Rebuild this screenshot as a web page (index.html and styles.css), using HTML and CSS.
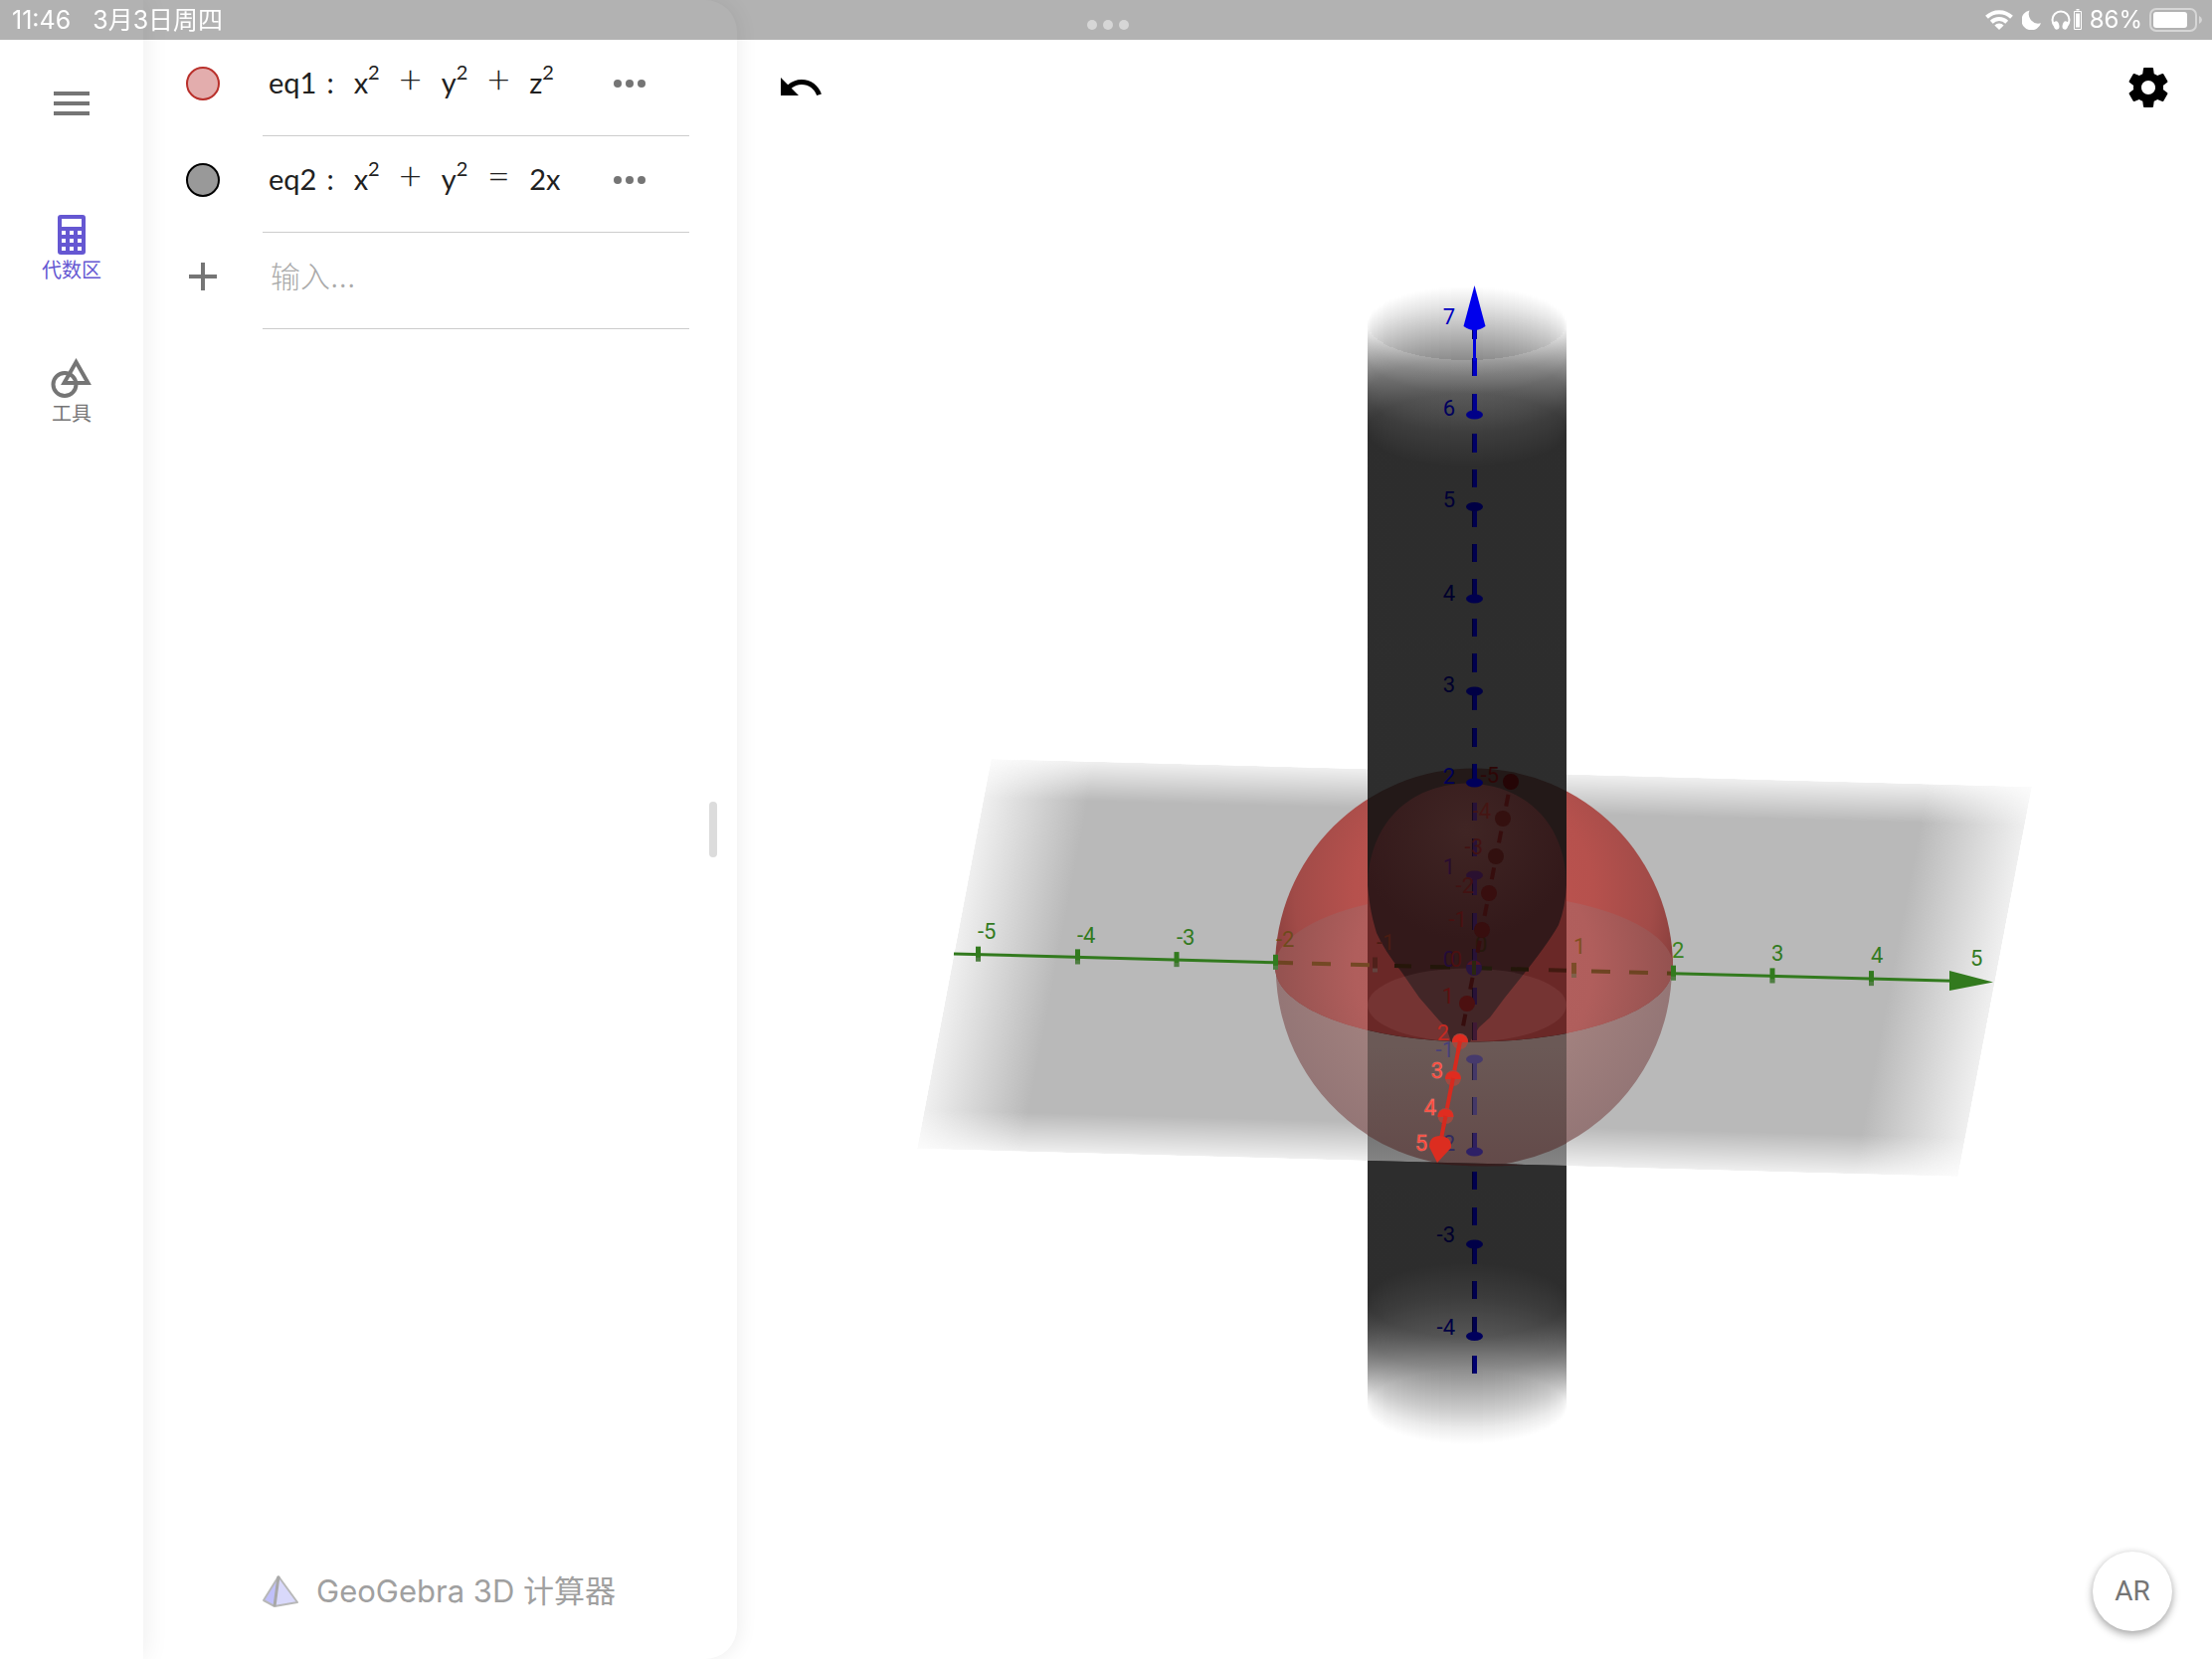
FILE: index.html
```html
<!DOCTYPE html>
<html lang="zh-CN">
<head>
<meta charset="utf-8">
<meta name="viewport" content="width=device-width, initial-scale=1">
<title>GeoGebra 3D 计算器</title>
<link rel="stylesheet" href="styles.css">
</head>
<body>
<header class="status">
  <div class="status-left"><span>11:46</span><span>3月3日周四</span></div>
  <div class="status-dots"><i></i><i></i><i></i></div>
  <div class="status-right">
    <svg class="ico-wifi" viewBox="0 0 28 20" aria-hidden="true"><g fill="none" stroke="#fff" stroke-width="4"><path d="M1.500 7.200A18 18 0 0 1 26.500 7.200"/><path d="M6.300 12.200A11 11 0 0 1 21.700 12.200"/></g><path d="M14 20l-4.600-4.600a6.500 6.500 0 0 1 9.200 0z" fill="#fff"/></svg>
    <svg class="ico-moon" viewBox="0 0 20 20" aria-hidden="true"><path d="M7.500 0.500A10 10 0 1 0 19 13.200 9.500 9.500 0 0 1 7.500 0.500z" fill="#fff"/></svg>
    <svg class="ico-phones" viewBox="0 0 32 22" aria-hidden="true"><path d="M4 17A8.500 8.500 0 1 1 16 17" fill="none" stroke="#fff" stroke-width="2"/><ellipse cx="5.500" cy="16.500" rx="2.800" ry="4.200" transform="rotate(-15 5.500 16.500)" fill="#fff"/><ellipse cx="14.500" cy="16.500" rx="2.800" ry="4.200" transform="rotate(15 14.500 16.500)" fill="#fff"/><path d="M23.500 2.500h7v18h-7z" fill="none" stroke="#fff"/><path d="M25 4.500h4v14h-4zM25.500 0h3v1.500h-3z" fill="#fff"/></svg>
    <span>86%</span>
    <svg class="ico-battery" viewBox="0 0 54 24" aria-hidden="true"><rect x="1" y="1" width="46" height="22" rx="6" fill="none" stroke="#d6d6d6" stroke-width="2"/><rect x="4" y="4" width="34" height="16" rx="3" fill="#fff"/><path d="M50 8q3 1.500 3 4t-3 4z" fill="#d6d6d6"/></svg>
  </div>
</header>

<div class="app">
  <nav class="rail">
    <button class="menu" aria-label="菜单"><svg viewBox="0 0 48 48"><path d="M6 12h36v4H6zM6 22h36v4H6zM6 32h36v4H6z"/></svg></button>
    <button class="tab active"><svg viewBox="0 0 48 48"><path fill-rule="evenodd" d="M13 4h22a3 3 0 0 1 3 3v34a3 3 0 0 1-3 3H13a3 3 0 0 1-3-3V7a3 3 0 0 1 3-3zM14 8v8h20V8zM14 20v4h4v-4zM22 20v4h4v-4zM30 20v4h4v-4zM14 28v4h4v-4zM22 28v4h4v-4zM30 28v4h4v-4zM14 36v4h4v-4zM22 36v4h4v-4zM30 36v4h4v-4z"/></svg><span>代数区</span></button>
    <button class="tab"><svg viewBox="0 0 48 48"><g fill="none" stroke="currentColor" stroke-width="4"><circle cx="17" cy="30.500" r="11.500"/><path d="M28.500 8L40.500 29H16.500z"/></g></svg><span>工具</span></button>
  </nav>

  <main class="panel">
    <ul class="rows">
      <li class="row">
        <button class="marble red" aria-label="eq1"></button>
        <div class="cell">
          <div class="formula"><span class="name">eq1</span><span class="colon">:</span><span>x<sup>2</sup></span><span class="op">+</span><span>y<sup>2</sup></span><span class="op">+</span><span>z<sup>2</sup></span></div>
          <button class="more" aria-label="更多"><svg viewBox="0 0 48 48"><circle cx="12" cy="24" r="4"/><circle cx="24" cy="24" r="4"/><circle cx="36" cy="24" r="4"/></svg></button>
        </div>
      </li>
      <li class="row">
        <button class="marble black" aria-label="eq2"></button>
        <div class="cell">
          <div class="formula"><span class="name">eq2</span><span class="colon">:</span><span>x<sup>2</sup></span><span class="op">+</span><span>y<sup>2</sup></span><span class="op">=</span><span>2x</span></div>
          <button class="more" aria-label="更多"><svg viewBox="0 0 48 48"><circle cx="12" cy="24" r="4"/><circle cx="24" cy="24" r="4"/><circle cx="36" cy="24" r="4"/></svg></button>
        </div>
      </li>
      <li class="row">
        <button class="plus" aria-label="添加"><svg viewBox="0 0 48 48"><path d="M22 10h4v12h12v4H26v12h-4V26H10v-4h12z"/></svg></button>
        <div class="cell"><input class="entry" type="text" placeholder="输入..." aria-label="输入"></div>
      </li>
    </ul>
    <footer class="brand">
      <svg viewBox="0 0 36 32" aria-hidden="true"><path d="M16 1L1 25l11 6z" fill="#c0c0fa"/><path d="M16 1l19 26-23 4z" fill="#d9d9fb"/><path d="M16 1L1 25l11 6 23-4z" fill="none" stroke="#b8b8b8" stroke-width="2" stroke-linejoin="round"/><path d="M16 1l-4 30" stroke="#a8a8a8" stroke-width="3"/></svg>
      <span>GeoGebra 3D 计算器</span>
    </footer>
    <div class="handle"></div>
  </main>

  <section class="view">
    <svg class="scene" viewBox="741 0 1483 1668" role="img" aria-label="3D">
      <defs>
        <linearGradient id="planeH"><stop offset="0" stop-color="#b9b9b9" stop-opacity=".22"/><stop offset=".1" stop-color="#b9b9b9"/><stop offset=".9" stop-color="#b9b9b9"/><stop offset="1" stop-color="#b9b9b9" stop-opacity=".22"/></linearGradient>
        <linearGradient id="planeV" x2="0" y2="1"><stop offset="0" stop-color="#fff" stop-opacity=".22"/><stop offset=".1" stop-color="#fff"/><stop offset=".9" stop-color="#fff"/><stop offset="1" stop-color="#fff" stop-opacity=".22"/></linearGradient>
        <mask id="planeMask" maskUnits="userSpaceOnUse" x="0" y="0" width="1000" height="1000"><rect width="1000" height="1000" fill="url(#planeV)"/></mask>
        <linearGradient id="wallBack" x2="0" y2="1">
          <stop offset="0" stop-opacity="0"/><stop offset=".015" stop-opacity=".09"/><stop offset=".031" stop-opacity=".2"/><stop offset=".067" stop-opacity=".45"/><stop offset=".099" stop-opacity=".58"/>
          <stop offset=".901" stop-opacity=".58"/><stop offset=".932" stop-opacity=".44"/><stop offset=".969" stop-opacity=".2"/><stop offset=".985" stop-opacity=".08"/><stop offset="1" stop-opacity="0"/>
        </linearGradient>
        <linearGradient id="wallFront" x2="0" y2="1">
          <stop offset="0" stop-color="#fff" stop-opacity=".16"/><stop offset=".015" stop-color="#707070" stop-opacity=".16"/><stop offset=".031" stop-color="#181818" stop-opacity=".22"/><stop offset=".067" stop-opacity=".43"/><stop offset=".099" stop-opacity=".58"/>
          <stop offset=".901" stop-opacity=".58"/><stop offset=".932" stop-opacity=".44"/><stop offset=".969" stop-opacity=".2"/><stop offset=".985" stop-opacity=".08"/><stop offset="1" stop-opacity="0"/>
        </linearGradient>
        <radialGradient id="red" gradientUnits="userSpaceOnUse" cx="1482" cy="900" r="240"><stop offset="0" stop-color="#c25651"/><stop offset=".5" stop-color="#b6514d"/><stop offset=".75" stop-color="#a14b48"/><stop offset=".9" stop-color="#843d3b"/></radialGradient>
        <radialGradient id="disc" gradientUnits="userSpaceOnUse" cx="1482" cy="972" r="200"><stop offset="0" stop-color="#b56260"/><stop offset=".6" stop-color="#b05e5c"/><stop offset="1" stop-color="#945250"/></radialGradient>
        <radialGradient id="low" gradientUnits="userSpaceOnUse" cx="1482" cy="972" r="200"><stop offset=".5" stop-color="#a48380"/><stop offset="1" stop-color="#947676"/></radialGradient>
        <radialGradient id="lens" gradientUnits="userSpaceOnUse" cx="1474" cy="835" r="110"><stop offset="0" stop-color="#402524"/><stop offset="1" stop-color="#33191a"/></radialGradient>
        <linearGradient id="skirt" x2="0" y2="1"><stop offset="0" stop-color="#6b6b6b"/><stop offset=".7" stop-color="#6d6d6d"/><stop offset="1" stop-color="#858585"/></linearGradient>
        <linearGradient id="lowCol" x2="0" y2="1"><stop offset=".4" stop-color="#6b5956"/><stop offset="1" stop-color="#634a49"/></linearGradient>
        <clipPath id="column"><rect x="1375" y="200" width="200" height="1300"/></clipPath>
        <clipPath id="belowCut"><rect x="1375" y="890" width="200" height="300"/></clipPath>
        <clipPath id="abovePlane"><path d="M1282 972.500A200 200 0 0 1 1682 972.500A200 75 0 0 1 1282 972.500z"/></clipPath>
      </defs>

      <g transform="matrix(1.0465 .028 -.0745 .392 996.500 763)"><rect width="1000" height="1000" fill="url(#planeH)" mask="url(#planeMask)"/></g>

      <rect x="1375" y="760" width="200" height="220" fill="#fff"/>
      <g id="walls" shape-rendering="crispEdges"></g>
      <path d="M1375 1011V1167L1575 1172V1011z" fill="url(#skirt)"/>

      <path d="M1375 804A200 200 0 0 0 1375 1141zM1575 796A200 200 0 0 1 1575 1149z" fill="url(#low)"/>
      <g clip-path="url(#abovePlane)">
        <path d="M1280 770h95v300h-95zM1575 770h110v300h-110z" fill="url(#red)"/>
        <path d="M1375 909A200 75 0 0 0 1375 1036zM1575 906A200 75 0 0 1 1575 1039z" fill="url(#disc)"/>
      </g>
      <g clip-path="url(#column)">
        <path d="M1282 972.500A200 200 0 0 0 1682 972.500z" fill="url(#lowCol)"/>
        <path d="M1375 1167L1575 1172V1190H1375z" fill="#2d2d2d"/>
        <path d="M1432 1168.500L1532 1171Q1482 1175 1432 1168.500z" fill="#371d1d"/>
        <path d="M1282 972.500A200 200 0 0 1 1682 972.500A200 75 0 0 1 1282 972.500z" fill="#231918"/>
        <g clip-path="url(#belowCut)"><path d="M1282 972.500A200 200 0 0 1 1682 972.500A200 75 0 0 1 1282 972.500z" fill="#6a2827"/></g>
        <path d="M1475 787.500C1416 789 1377 828 1375 890C1377 912 1380 925 1384 938Q1392 956 1409 977L1427 1003 1447 1026 1454 1033 1459 1047.500H1478L1487 1033 1498 1023 1513 1003 1537 973Q1558 946 1567 930Q1574 912 1575 890C1574 828 1535 789 1475 787.500z" fill="url(#lens)"/>
        <ellipse cx="1475" cy="1010.500" rx="100" ry="37" fill="#ffc8c8" fill-opacity=".075"/>
      </g>

      <g id="axis-z"></g>
      <g id="axis-y"></g>
      <g id="labels" class="labels"></g>
      <g id="axis-x"></g>
    </svg>
    <button class="tool undo" aria-label="撤销"><svg viewBox="0 0 24 24"><path d="M12.500 8c-2.650 0-5.050.990-6.900 2.600L2 7v9h9l-3.620-3.620c1.390-1.160 3.160-1.880 5.120-1.880 3.540 0 6.550 2.310 7.600 5.500l2.370-.780C21.080 11.030 17.150 8 12.500 8z"/></svg></button>
    <button class="tool settings" aria-label="设置"><svg viewBox="0 0 24 24"><path d="M19.430 12.980c.04-.32.07-.64.07-.98s-.03-.66-.07-.98l2.110-1.650c.19-.15.24-.42.12-.64l-2-3.460c-.12-.22-.39-.3-.61-.22l-2.490 1c-.52-.4-1.080-.73-1.690-.98l-.38-2.650C14.460 2.180 14.250 2 14 2h-4c-.25 0-.46.18-.49.42l-.38 2.650c-.61.25-1.170.59-1.690.98l-2.490-1c-.23-.09-.49 0-.61.22l-2 3.460c-.13.22-.07.49.12.64l2.110 1.650c-.04.32-.07.65-.07.98s.03.66.07.98l-2.110 1.650c-.19.15-.24.42-.12.64l2 3.460c.12.22.39.3.61.22l2.490-1c.52.4 1.080.73 1.690.98l.38 2.650c.03.24.24.42.49.42h4c.25 0 .46-.18.49-.42l.38-2.650c.61-.25 1.170-.59 1.690-.98l2.490 1c.23.09.49 0 .61-.22l2-3.460c.12-.22.07-.49-.12-.64l-2.110-1.650zM12 15.500c-1.930 0-3.500-1.570-3.500-3.500s1.570-3.500 3.500-3.500 3.500 1.570 3.500 3.500-1.570 3.500-3.500 3.500z"/></svg></button>
    <button class="ar">AR</button>
  </section>
</div>
<script src="scene.js"></script>
</body>
</html>
```

FILE: styles.css
```css
* { box-sizing: border-box; }
body { margin: 0; background: #fff; font-family: Inter, "Noto Sans CJK SC", sans-serif; color: #757575; }
button { border: 0; padding: 0; margin: 0; background: none; font: inherit; color: inherit; cursor: pointer; }
svg { display: block; fill: currentColor; }

.status { position: fixed; top: 0; left: 0; right: 0; z-index: 10; height: 40px; padding: 0 9px 0 12px; display: grid; grid-template-columns: 1fr auto 1fr; align-items: center; background: rgba(0, 0, 0, .3); color: #fff; font-size: 24px; line-height: 40px; }
.status-left { display: flex; gap: 22px; font-size: 25px; }
.status-dots { display: flex; gap: 6px; padding-top: 10px; }
.status-dots i { width: 10px; height: 10px; border-radius: 50%; background: #d6d6d6; }
.status-right { display: flex; justify-content: flex-end; align-items: center; gap: 7px; }
.ico-wifi { width: 28px; height: 20px; }
.ico-moon { width: 20px; height: 20px; margin-left: 2px; }
.ico-phones { width: 32px; height: 22px; margin-left: 2px; }
.ico-battery { width: 54px; height: 24px; }

.app { display: grid; grid-template-columns: 144px 597px 1fr; height: 100vh; }

.rail { position: relative; z-index: 3; display: flex; flex-direction: column; align-items: center; gap: 72px; padding-top: 40px; background: #fff; box-shadow: 2px 0 24px rgba(0, 0, 0, .07); }
.rail svg { width: 48px; height: 48px; }
.menu { height: 128px; width: 144px; display: flex; align-items: center; justify-content: center; margin-bottom: -28px; }
.tab { width: 144px; display: flex; flex-direction: column; align-items: center; font-size: 20px; line-height: 24px; }
.tab.active { color: #6557d2; }

.panel { position: relative; z-index: 2; display: flex; flex-direction: column; padding-top: 40px; background: #fff; border-radius: 0 32px 32px 0; box-shadow: 2px 0 20px rgba(0, 0, 0, .07); }
.rows { list-style: none; margin: 0; padding: 0 48px 0 0; }
.row { display: grid; grid-template-columns: 120px 1fr; height: 97px; }
.row > button { justify-self: center; align-self: center; margin-bottom: 9px; }
.cell { display: flex; align-items: center; padding: 0 36px 8px 6px; border-bottom: 1px solid #ccc; }
.marble { width: 34px; height: 34px; border-radius: 50%; border: 2px solid; }
.marble.red { background: #e3adad; border-color: #b9302b; }
.marble.black { background: #999; border-color: #000; }
.plus svg, .more svg { width: 48px; height: 48px; }
.formula { flex: 1; display: flex; align-items: baseline; gap: 20px; padding-bottom: 6px; color: #212121; font: 29px/40px Lato, "Liberation Sans", sans-serif; white-space: nowrap; }
.formula .colon { margin-left: -10px; }
.formula .op { width: 22px; display: flex; justify-content: center; font-size: 40px; font-weight: 300; line-height: 40px; }
.formula sup { font-size: 20px; line-height: 0; vertical-align: 14px; }
.entry { width: 100%; height: 48px; border: 0; outline: 0; padding: 0 2px; background: none; font: 300 30px/48px Inter, "Noto Sans CJK SC", sans-serif; color: #212121; }
.entry::placeholder { color: #aaa; opacity: 1; }
.brand { margin-top: auto; padding: 0 0 48px 120px; display: flex; align-items: center; gap: 18px; font-size: 31px; line-height: 40px; color: #a0a0a0; white-space: nowrap; }
.brand svg { width: 36px; height: 32px; }
.handle { position: absolute; right: 20px; top: 50%; width: 8px; height: 56px; margin-top: -28px; border-radius: 4px; background: #dcdcdc; }

.view { position: relative; min-width: 0; height: 100vh; background: #fff; }
.scene { width: 100%; height: 100%; }
.labels { font: 22px Roboto, sans-serif; }
.tool { position: absolute; top: 64px; color: #000; }
.tool svg { width: 48px; height: 48px; }
.undo { left: 40px; }
.settings { right: 40px; }
.ar { position: absolute; right: 40px; bottom: 28px; width: 80px; height: 80px; border-radius: 50%; background: #fff; color: #757575; font: 28px/80px Roboto, sans-serif; box-shadow: 0 4px 8px rgba(0, 0, 0, .3), 0 0 6px rgba(0, 0, 0, .1); }
```

FILE: scene.js
```js
const NS = 'http://www.w3.org/2000/svg';
function add(parent, tag, attrs, text) {
  const el = document.createElementNS(NS, tag);
  for (const key in attrs) el.setAttribute(key, attrs[key]);
  if (text !== undefined) el.textContent = text;
  document.getElementById(parent).appendChild(el);
}

// Cylinder walls: vertical strips that share one gradient, shifted along the rim ellipse.
for (const side of [-1, 1]) {
  const fill = side < 0 ? 'url(#wallBack)' : 'url(#wallFront)';
  for (let x = 1375; x < 1575; x += 2) {
    const t = (x + 1 - 1475) / 100;
    const dy = side * 37 * Math.sqrt(1 - t * t);
    add('walls', 'rect', { x, y: Math.round(325 + dy), width: 2, height: 1090, fill });
  }
}

// z axis: dashes [from, to, colour], then tick discs
const navy = '#00004e', dim = '#281238', faint = '#443868';
[[331, 341, '#0000a8'], [360, 378, '#0000c4'], [396, 414, '#000090'], [436, 455, '#000066'], [472, 490, '#000054'],
 [512, 530, navy], [547, 565, navy], [582, 600, navy], [622, 640, navy], [657, 676, navy], [697, 714, navy],
 [732, 751, navy], [768, 786, '#000058'], [807, 825, dim], [843, 861, dim], [882, 900, dim], [918, 935, dim],
 [954, 968, dim], [993, 1010, dim], [1028, 1046, '#401a35'], [1067, 1086, faint], [1103, 1121, faint],
 [1139, 1156, '#302060'], [1178, 1196, navy], [1214, 1232, navy], [1253, 1271, navy], [1288, 1306, navy],
 [1324, 1342, navy], [1363, 1381, '#000070']].forEach(([a, b, c]) => {
  add('axis-z', 'rect', { x: 1480, y: a, width: 5, height: b - a, fill: c });
  add('axis-z', 'rect', { x: 1480, y: a, width: 1, height: b - a, fill: '#000', 'fill-opacity': 0.45 });
});
add('axis-z', 'rect', { x: 1481, y: 331, width: 3, height: 32, fill: '#0000dc' });
add('axis-z', 'path', { d: 'M1482.5 287L1471.500 328Q1482.500 336 1493.500 328z', fill: '#0000ec' });
[[417, '#000088'], [509.5, '#000044'], [602, '#00004e'], [695, '#000044'], [787, '#00005a'], [880, '#2a1030'],
 [1065, '#463a6c'], [1158, '#2e2066'], [1251, '#000048'], [1343.500, '#00005c']].forEach(([y, c]) =>
  add('axis-z', 'ellipse', { cx: 1482.5, cy: y, rx: 8.5, ry: 4.5, fill: c }));

// y axis
const yAt = x => 959 + (x - 959) * 0.0272;
const green = '#327a1e';
const seg = (a, b, c, w) => add('axis-y', 'line', { x1: a, y1: yAt(a), x2: b, y2: yAt(b), stroke: c, 'stroke-width': w });
seg(959, 1283, green, 3);
seg(1682, 1964, green, 3);
[[1285, 1300, '#6e4422'], [1319, 1338, '#744824'], [1358, 1377, '#744824'], [1402, 1419, '#251609'], [1438, 1458, '#221609'],
 [1487, 1500, '#221c0c'], [1519, 1537, '#221609'], [1557, 1575, '#421a10'], [1600, 1619, '#6e4422'], [1638, 1657, '#6e4422'],
 [1676, 1682, '#5a4018']].forEach(([a, b, c]) => seg(a, b, c, 4));
[[983.5, green], [1083.5, green], [1183, green], [1282.5, green], [1382.5, '#50201a'], [1582.5, '#7c4c28'],
 [1682.5, green], [1782, green], [1881.5, green]].forEach(([x, c]) => {
  add('axis-y', 'rect', { x: x - 2.5, y: yAt(x) - 8, width: 5, height: 15, fill: c });
  add('axis-y', 'rect', { x: x - 2.5, y: yAt(x) + 3, width: 5, height: 4, fill: '#888', 'fill-opacity': 0.35 });
});
add('axis-y', 'path', { d: 'M1960 976L2004 987.500L1960 996z', fill: green });

// x axis
add('axis-x', 'path', { d: 'M1519 786L1468 1047', stroke: '#360d0d', 'stroke-width': 4, 'stroke-dasharray': '7 6 12 12.5', fill: 'none' });
add('axis-x', 'path', { d: 'M1468 1047L1448 1150', stroke: '#d62a1e', 'stroke-width': 4, fill: 'none' });
[[1519, 786, '#250506'], [1511, 823, '#34100f'], [1504, 861, '#32100f'], [1497, 898, '#380e0e'], [1490, 935, '#380e0e'],
 [1475, 1009, '#4c1010']].forEach(([x, y, c]) => add('axis-x', 'circle', { cx: x, cy: y, r: 8, fill: c }));
add('axis-x', 'circle', { cx: 1482, cy: 973, r: 8, fill: '#2a1440' });
add('axis-x', 'path', { d: 'M1475 970A8 8 0 0 1 1489 970z', fill: '#561420' });
add('axis-x', 'rect', { x: 1480, y: 966, width: 4, height: 14, fill: '#2a2610' });
[[1468, 1047], [1461, 1084], [1453.500, 1122]].forEach(([x, y]) => {
  add('axis-x', 'circle', { cx: x, cy: y, r: 8, fill: '#a04a40' });
  add('axis-x', 'path', { d: `M${x - 8} ${y + 1}A8 8 0 0 1 ${x + 8} ${y + 1}z`, fill: '#e02c20' });
  add('axis-x', 'path', { d: `M${x} ${y}l-2 10`, stroke: '#d62a1e', 'stroke-width': 4 });
});
add('axis-x', 'path', { d: 'M1445 1169L1437 1153Q1437 1142 1448 1142Q1460 1143 1459 1154z', fill: '#dc2d20' });

// Labels: [text, x, baseline, colour]
const labels = (list, anchor, extra) => list.forEach(([t, x, y, c]) =>
  add('labels', 'text', Object.assign({ x, y, fill: c, 'text-anchor': anchor }, extra), t));
labels([['7', 1463, 326, '#0000c0'], ['6', 1463, 418, '#00005e'], ['5', 1463, 510, '#000036'], ['4', 1463, 604, '#00002c'],
  ['3', 1463, 696, '#00002c'], ['2', 1463, 788, '#000058'], ['1', 1463, 879, '#2a0c30'], ['0', 1463, 972, '#240c38'],
  ['-1', 1462, 1063, '#484078'], ['-2', 1463, 1157, '#322a60'], ['-3', 1463, 1249, '#00002c'], ['-4', 1463, 1342, '#000044']], 'end');
labels([['-5', 983, 944, green], ['-4', 1083, 948, green], ['-3', 1183, 950, green], ['-2', 1283, 952, '#6e4a1c'],
  ['-1', 1384, 955, '#4a1c12'], ['0', 1483, 957, '#26180c'], ['1', 1582, 959, '#80501e'], ['2', 1681, 963, '#3b8420'],
  ['3', 1781, 966, green], ['4', 1881, 968, green], ['5', 1981, 971, green]], 'start');
labels([['-5', 1507, 787, '#2e0606'], ['-4', 1499, 823, '#451513'], ['-3', 1491, 859, '#421212'], ['-2', 1482, 898, '#421212'],
  ['-1', 1475, 932, '#481010'], ['0', 1470, 972, '#4c1010'], ['1', 1462, 1009, '#5c1010'], ['2', 1457, 1046, '#c42a22']], 'end');
labels([['3', 1451, 1084, '#ff3a2c'], ['4', 1444, 1121, '#ff3a2c'], ['5', 1435, 1157, '#ff3a2c']], 'end',
  { stroke: '#ff8a80', 'stroke-opacity': 0.5, 'stroke-width': 1 });
```
